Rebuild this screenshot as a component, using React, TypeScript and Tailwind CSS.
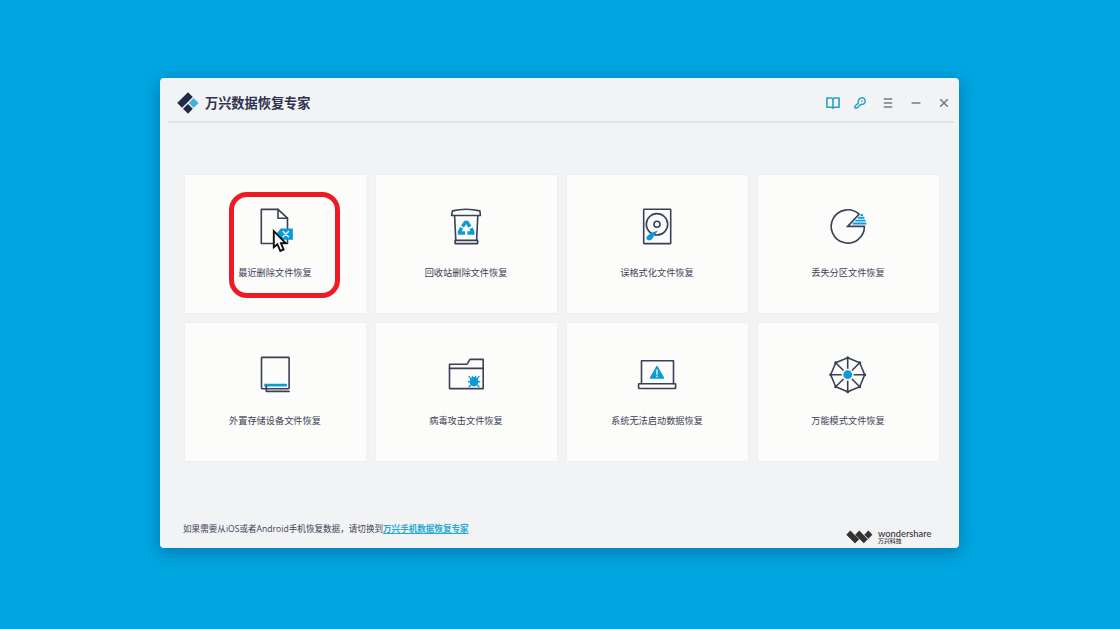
import type { ReactNode } from 'react'

const INK = '#3a4056'
const BLUE = '#0c9bd7'

type Tool = {
  label: string
  icon: ReactNode
  highlighted?: boolean
}

function ToolIcon({ children }: { children: ReactNode }) {
  return (
    <svg
      viewBox="0 0 44 44"
      className="h-11 w-11"
      fill="none"
      stroke={INK}
      strokeWidth="1.6"
      strokeLinejoin="round"
      strokeLinecap="round"
    >
      {children}
    </svg>
  )
}

const tools: Tool[] = [
  {
    label: '最近删除文件恢复',
    highlighted: true,
    icon: (
      <ToolIcon>
        <path d="M8.3 4.4H25L34.5 13.2V38.5H8.3Z" />
        <path d="M25 4.4V13.2H34.5" />
        <path d="M27.8 23.5H39.9V34.8H27.8L22.8 29.2Z" fill={BLUE} stroke="none" />
        <path d="M30.1 26.5L35.5 31.7M35.5 26.5L30.1 31.7" stroke="#e8f7fd" strokeWidth="1.4" />
      </ToolIcon>
    ),
  },
  {
    label: '回收站删除文件恢复',
    icon: (
      <ToolIcon>
        <path d="M8.5 5.9Q22 2.6 35.9 5.9L36.4 10.5H7.6Z" />
        <path d="M10.6 10.7L11.8 35.4M33.8 10.7L32.6 35.4" />
        <path d="M11.1 35.4H33.6V38.6H11.1Z" />
        <g stroke={BLUE} strokeWidth="3.5" strokeLinecap="butt" strokeLinejoin="miter">
          <path d="M18.5 21.6L21.2 17.5H23.2L25.9 21.8" />
          <path d="M27 23.2L28.7 26.6V28.1H23.4" />
          <path d="M21.1 28.1H15.6V26.6L17.6 22.8" />
        </g>
      </ToolIcon>
    ),
  },
  {
    label: '误格式化文件恢复',
    icon: (
      <ToolIcon>
        <rect x="8.7" y="4.3" width="27" height="34.3" rx="0.6" />
        <circle cx="22" cy="19.3" r="10.7" />
        <circle cx="22" cy="19.3" r="3" />
        <path
          d="M22.8 25.8C20.2 26 16.6 27.6 13.4 30.1C10.8 32.2 11 34.2 12.6 35C14.7 36 16.7 35 17.8 33C19.3 30.4 21.5 28.4 22.8 25.8Z"
          fill={BLUE}
          stroke="none"
        />
      </ToolIcon>
    ),
  },
  {
    label: '丢失分区文件恢复',
    icon: (
      <ToolIcon>
        <path d="M21.7 21.4L33 9.2A16.6 16.6 0 1 0 38.4 21.4Z" strokeLinejoin="miter" />
        <path
          d="M34.4 10.1H37M32 12.8H38.4M29.3 15.6H39.5M26.7 18.5H40.3"
          stroke={BLUE}
          strokeWidth="1.9"
          strokeLinecap="butt"
        />
      </ToolIcon>
    ),
  },
  {
    label: '外置存储设备文件恢复',
    icon: (
      <ToolIcon>
        <rect x="8.5" y="4.4" width="27.6" height="31.3" rx="0.6" />
        <path d="M11.3 32.1H33.9" stroke={BLUE} strokeWidth="2.7" strokeLinecap="butt" />
        <path d="M13.3 33V38.4H36.1" />
      </ToolIcon>
    ),
  },
  {
    label: '病毒攻击文件恢复',
    icon: (
      <ToolIcon>
        <path d="M5.5 11.2H23.1L26 6.4H39.2V35.6H5.5Z" />
        <path d="M5.5 15.4H39.2" />
        <ellipse cx="30" cy="28.7" rx="4.3" ry="4.8" fill={BLUE} stroke="none" />
        <path
          d="M25.1 23.6L27.5 26.2M34.9 23.6L32.5 26.2M24.3 28.7H35.7M25.1 33.8L27.5 31.2M34.9 33.8L32.5 31.2M28.3 23.4L28.8 25M31.7 23.4L31.2 25"
          stroke={BLUE}
          strokeWidth="1.4"
        />
      </ToolIcon>
    ),
  },
  {
    label: '系统无法启动数据恢复',
    icon: (
      <ToolIcon>
        <path d="M6.5 30.6V7.7H38.5V30.6" />
        <rect x="3.6" y="30.7" width="37" height="4.8" rx="0.6" />
        <path d="M22 13.7L28.4 25H15.6Z" fill={BLUE} stroke={BLUE} />
        <path d="M22 17V21.3M22 23.3V23.7" stroke="#e8f7fd" strokeWidth="1.4" />
      </ToolIcon>
    ),
  },
  {
    label: '万能模式文件恢复',
    icon: (
      <ToolIcon>
        <path d="M21.7 4.7L33.7 9.7L38.7 21.7L33.7 33.7L21.7 38.7L9.7 33.7L4.7 21.7L9.7 9.7Z" />
        <path d="M21.7 4.7V38.7M4.7 21.7H38.7M9.7 9.7L33.7 33.7M33.7 9.7L9.7 33.7" />
        <g fill={INK} stroke="none">
          <circle cx="21.7" cy="4.7" r="1.5" />
          <circle cx="33.7" cy="9.7" r="1.5" />
          <circle cx="38.7" cy="21.7" r="1.5" />
          <circle cx="33.7" cy="33.7" r="1.5" />
          <circle cx="21.7" cy="38.7" r="1.5" />
          <circle cx="9.7" cy="33.7" r="1.5" />
          <circle cx="4.7" cy="21.7" r="1.5" />
          <circle cx="9.7" cy="9.7" r="1.5" />
        </g>
        <circle cx="21.7" cy="21.7" r="5.2" fill={BLUE} stroke="#fcfcfa" />
      </ToolIcon>
    ),
  },
]

function AppLogo() {
  return (
    <svg viewBox="0 0 22 22" className="h-[22px] w-[22px]">
      <path d="M11 0.2L15.8 5L5.1 15.7L0.2 10.9Z" fill="#212b49" />
      <path d="M16.7 6L21.6 10.9L16.7 15.8L11.8 10.9Z" fill="#43b1d8" />
      <path d="M11 11.9L15.8 16.8L11 21.7L6 16.7Z" fill="#212b49" />
    </svg>
  )
}

function TitleBar() {
  return (
    <header className="mr-[5px] ml-2 flex h-[45px] shrink-0 items-center justify-between border-b-2 border-[#e0e2e5] pt-[7px] pr-[5px] pl-[9px]">
      <div className="flex items-center gap-[6px]">
        <AppLogo />
        <h1 className="pt-px text-[13.2px] leading-none font-bold text-[#2c3350]">万兴数据恢复专家</h1>
      </div>

      <div className="flex items-center text-[#77798a]">
        <button type="button" aria-label="使用指南" className="mr-[14px]">
          <svg viewBox="0 0 14 12" className="h-3 w-[14px]" fill="none" stroke="#289fc8" strokeWidth="1.6" strokeLinejoin="round">
            <path d="M7 2L5.9 1H0.9V10.3H5.9L7 11.2L8.1 10.3H13.1V1H8.1Z" />
            <path d="M7 2V11" />
          </svg>
        </button>
        <button type="button" aria-label="注册" className="mr-[17px]">
          <svg viewBox="0 0 12 12" className="h-3 w-3" fill="none" stroke="#289fc8" strokeWidth="1.5" strokeLinejoin="round">
            <path d="M4.5 5.7C3.9 2.9 5.5 0.8 7.8 0.8C9.8 0.8 11.3 2.3 11.2 4.2C11.2 6.6 9 8 6.4 7.5L3.1 10.9H0.9V9.2Z" />
            <path d="M7.6 3.5L8.5 4.4" />
          </svg>
        </button>
        <button type="button" aria-label="菜单" className="mr-[18px]">
          <svg viewBox="0 0 10 10" className="h-[10px] w-[10px]" stroke="currentColor" strokeWidth="1.5">
            <path d="M0.8 1H9.2M0.8 5H9.2M0.8 9H9.2" />
          </svg>
        </button>
        <button type="button" aria-label="最小化" className="mr-[18.5px]">
          <svg viewBox="0 0 10 10" className="h-[10px] w-[10px]" stroke="currentColor" strokeWidth="1.5">
            <path d="M0.6 5H9.4" />
          </svg>
        </button>
        <button type="button" aria-label="关闭">
          <svg viewBox="0 0 10 10" className="h-[10px] w-[10px]" stroke="currentColor" strokeWidth="1.6">
            <path d="M1.2 1.2L8.8 8.8M8.8 1.2L1.2 8.8" />
          </svg>
        </button>
      </div>
    </header>
  )
}

function ToolCard({ label, icon, highlighted }: Tool) {
  return (
    <div className="relative flex h-[140px] flex-col items-center border border-[#eef0f1] bg-[#fcfcfa] pt-[30px] pr-px">
      {icon}
      <p className="mt-[15.5px] text-[9.2px] leading-4 whitespace-nowrap text-[#3d4256]">{label}</p>

      {highlighted && (
        <>
          <svg viewBox="0 0 16 24" className="absolute top-[54px] left-[87px] h-6 w-4">
            <path
              d="M1.8 2.2V18.3L5.4 15.2L8.3 21.9L11.6 20.4L8.9 14.1H13.6Z"
              fill="#fff"
              stroke="#111"
              strokeWidth="1.9"
            />
          </svg>
          <div className="absolute top-[17px] left-[44px] h-[106px] w-[111px] rounded-[18px] border-5 border-[#ed1c24]"></div>
        </>
      )}
    </div>
  )
}

function Footer() {
  return (
    <footer className="mt-auto flex items-end justify-between pr-7 pb-[3px] pl-[23px]">
      <p className="mb-[8px] text-[8.55px] leading-4 whitespace-nowrap text-[#3d4256]">
        <span className="tracking-[0.03px]">如果需要从iOS或者Android手机恢复数据，请切换到</span>
        <a href="#" className="font-bold text-[#25a9d0] underline">
          万兴手机数据恢复专家
        </a>
      </p>

      <div className="flex items-center gap-[5px] text-[#333132]">
        <svg viewBox="0 0 27 14" className="h-[14px] w-[27px]" fill="currentColor">
          <path d="M4.3 0.6L13 9.3L8.9 13.3L0.3 4.7Z" />
          <path d="M13.2 0.6L21.8 9.3L17.8 13.3L9.2 4.7Z" />
          <path d="M9.3 5.5L13 9.3L8.9 13.3L7.2 7.7Z" />
          <path d="M22.4 0.6L26.4 4.7L22.4 8.8L18.3 4.7Z" />
        </svg>
        <div className="flex w-[53px] flex-col pb-px">
          <span className="font-[family-name:Lato] text-[9.3px] leading-[9px] font-medium">wondershare</span>
          <span className="text-[5.9px] leading-[6px] font-medium">万兴科技</span>
        </div>
      </div>
    </footer>
  )
}

export default function App() {
  return (
    <main className="flex h-screen w-screen items-start justify-center overflow-hidden bg-[#00a6e0] pt-[78px] pr-px font-['Open_Sans','Noto_Sans_CJK_SC',sans-serif]">
      <section className="flex h-[470px] w-[799px] flex-col rounded-[4px] bg-[#f2f3f5] shadow-[0_4px_18px_rgba(0,60,120,0.45)]">
        <TitleBar />
        <div className="mx-6 mt-[51px] grid grid-cols-[repeat(4,183px)] gap-2">
          {tools.map((tool) => (
            <ToolCard key={tool.label} {...tool} />
          ))}
        </div>
        <Footer />
      </section>
    </main>
  )
}
